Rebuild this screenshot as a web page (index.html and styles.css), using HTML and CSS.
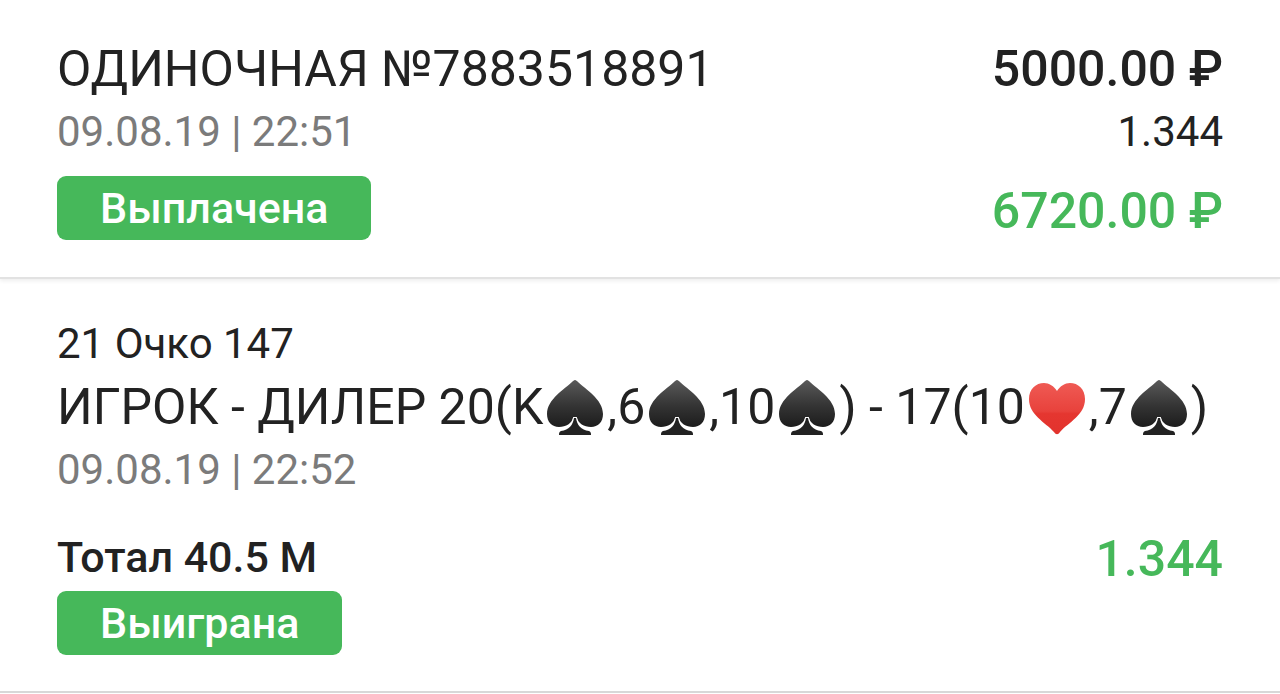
FILE: index.html
```html
<!DOCTYPE html>
<html lang="ru">
<head>
<meta charset="utf-8">
<meta name="viewport" content="width=device-width, initial-scale=1">
<title>История ставок</title>
<link rel="stylesheet" href="styles.css">
</head>
<body>
<svg class="defs" aria-hidden="true">
  <defs>
    <linearGradient id="ink" x1="0" y1="0" x2="0" y2="1">
      <stop offset="0" stop-color="#5a5a5a"/><stop offset=".55" stop-color="#343434"/><stop offset="1" stop-color="#1c1c1c"/>
    </linearGradient>
    <linearGradient id="red" x1="0" y1="0" x2="0" y2="1">
      <stop offset="0" stop-color="#ef5a54"/><stop offset=".55" stop-color="#e8423c"/><stop offset=".6" stop-color="#e53630"/><stop offset="1" stop-color="#e2332d"/>
    </linearGradient>
    <symbol id="spade" viewBox="0 0 56 56">
      <path fill="url(#ink)" d="M28 0C29 0 30 1 31 2C38 9 56 19 56 34C56 42 51 47 44 47C37 47 31 43 30 38H26C25 43 19 47 12 47C5 47 0 42 0 34C0 19 18 9 25 2C26 1 27 0 28 0Z"/>
      <path fill="#222" stroke="#fff" stroke-width="2" paint-order="stroke" d="M27 38H29C30 45 34 50 42 51C44 52 44 53 44 55H12C12 53 12 52 14 51C22 50 26 45 27 38Z"/>
    </symbol>
    <symbol id="heart" viewBox="0 0 56 56">
      <path fill="url(#red)" d="M28 11C25 6 20 3 15 3C7 3 0 9 0 19C0 35 16 42 25 52C27 55 29 55 31 52C40 42 56 35 56 19C56 9 49 3 41 3C36 3 31 6 28 11Z"/>
    </symbol>
  </defs>
</svg>
<main class="ticket">
  <section class="summary">
    <div class="info">
      <h1 class="title">ОДИНОЧНАЯ №7883518891</h1>
      <time class="date">09.08.19 | 22:51</time>
      <span class="badge">Выплачена</span>
    </div>
    <div class="sums">
      <strong class="amount">5000.00 ₽</strong>
      <span class="odds">1.344</span>
      <strong class="amount payout">6720.00 ₽</strong>
    </div>
  </section>
  <section class="event">
    <p class="league">21 Очко 147</p>
    <h2 class="title">ИГРОК - ДИЛЕР 20(K<svg class="suit" role="img" aria-label="пики"><use href="#spade"/></svg>,6<svg class="suit" role="img" aria-label="пики"><use href="#spade"/></svg>,10<svg class="suit" role="img" aria-label="пики"><use href="#spade"/></svg>) - 17(10<svg class="suit" role="img" aria-label="червы"><use href="#heart"/></svg>,7<svg class="suit" role="img" aria-label="пики"><use href="#spade"/></svg>)</h2>
    <time class="date">09.08.19 | 22:52</time>
    <div class="outcome">
      <strong class="market">Тотал 40.5 М</strong>
      <strong class="amount payout">1.344</strong>
    </div>
    <span class="badge">Выиграна</span>
  </section>
</main>
</body>
</html>
```
FILE: styles.css
```css
* { box-sizing: border-box; }
body { margin: 0; background: #fff; color: #222; font-family: Roboto, "Noto Sans", sans-serif; }
h1, h2, p { margin: 0; font-weight: 400; }
strong { font-weight: 500; }
.defs { position: absolute; width: 0; height: 0; }
.summary {
  display: flex;
  justify-content: space-between;
  align-items: flex-start;
  padding: 37px 57px 34px;
  border-bottom: 2px solid #e2e2e2;
  box-shadow: 0 2px 4px rgba(0, 0, 0, .07);
}
.info, .sums, .event { display: flex; flex-direction: column; align-items: flex-start; }
.sums { align-items: flex-end; }
.title { font-size: 50px; line-height: 64px; white-space: nowrap; }
.date, .odds, .league { font-size: 42px; line-height: 62px; }
.date { color: #7b7b7b; }
.badge {
  margin-top: 13px;
  padding: 0 43px;
  border-radius: 9px;
  background: #46b85a;
  color: #fff;
  font-size: 43px;
  font-weight: 500;
  line-height: 64px;
}
.market { font-size: 43px; line-height: 60px; }
.amount { font-size: 50px; line-height: 64px; }
.payout { color: #46b85a; }
.sums .payout { margin-top: 16px; }
.event { padding: 34px 57px 36px; border-bottom: 2px solid #d8d8d8; }
.suit { width: 56px; height: 56px; margin: 0 4px; vertical-align: -12px; }
.outcome { display: flex; justify-content: space-between; align-self: stretch; margin-top: 26px; }
.event .badge { margin-top: 0; }
```
